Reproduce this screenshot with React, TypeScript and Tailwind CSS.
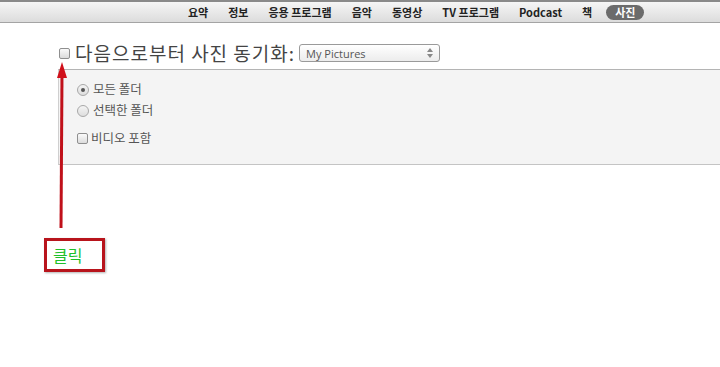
const tabs = ["요약", "정보", "응용 프로그램", "음악", "동영상", "TV 프로그램", "Podcast", "책"];

function Radio({ checked }: { checked?: boolean }) {
	return (
		<span className="flex h-[12px] w-[12px] items-center justify-center rounded-full border border-[#a8a8a8] bg-gradient-to-b from-[#f4f4f4] to-[#dedede]">
			{checked && <span className="h-[4px] w-[4px] rounded-full bg-[#555]" />}
		</span>
	);
}

function Box({ className = "" }: { className?: string }) {
	return (
		<span
			className={`block h-[11px] w-[11px] rounded-[2px] border border-[#8f8f8f] bg-gradient-to-b from-[#fafafa] to-[#dcdcdc] ${className}`}
		/>
	);
}

export default function App() {
	return (
		<div
			className="relative h-[367px] w-[720px] overflow-hidden bg-white"
			style={{ fontFamily: '"Noto Sans CJK KR", "Noto Sans", sans-serif' }}
		>
			<header className="flex h-[23px] items-center border-t-2 border-b border-t-[#8a8a8a] border-b-[#a4a4a4] bg-gradient-to-b from-[#f6f6f6] to-[#dcdcdc] pl-[188px]">
				<nav className="flex items-center gap-[20px] text-[11px] font-bold text-[#222]">
					{tabs.map((t) => (
						<span key={t} className="leading-none">
							{t}
						</span>
					))}
					<span className="-ml-[6px] rounded-full bg-[#6b6b6b] px-[9px] py-[2px] leading-[11px] text-white">사진</span>
				</nav>
			</header>

			<div className="flex items-center pl-[59px] pt-[19px]">
				<Box />
				<span className="ml-[5px] text-[19px] leading-[22px] tracking-[1px] text-[#444]">다음으로부터 사진 동기화:</span>
				<div className="ml-[4px] flex h-[18px] w-[141px] items-center justify-between rounded-[3px] border border-[#9a9a9a] bg-gradient-to-b from-white to-[#ececec] pl-[6px] pr-[6px]">
					<span className="text-[11px] leading-none text-[#555]" style={{ fontFamily: '"Open Sans", sans-serif' }}>
						My Pictures
					</span>
					<svg width="6" height="10" viewBox="0 0 6 10">
						<polygon points="3,0 6,4 0,4" fill="#888" />
						<polygon points="3,10 6,6 0,6" fill="#888" />
					</svg>
				</div>
			</div>

			<section className="mt-[5px] ml-[58px] h-[96px] border-t border-b border-l border-t-[#b4b4b4] border-b-[#c4c4c4] border-l-[#cfcfcf] bg-[#f4f4f4] pl-[18px] pt-[9px] text-[12.5px] text-[#555]">
				<label className="flex h-[21px] items-center gap-[4px]">
					<Radio checked />
					<span>모든 폴더</span>
				</label>
				<label className="flex h-[21px] items-center gap-[4px]">
					<Radio />
					<span>선택한 폴더</span>
				</label>
				<label className="mt-[7px] flex h-[21px] items-center gap-[3px]">
					<Box />
					<span>비디오 포함</span>
				</label>
			</section>

			<svg className="absolute left-[54px] top-[60px]" width="16" height="172" viewBox="0 0 16 172">
				<line x1="8" y1="14" x2="7" y2="168" stroke="#c0101a" strokeWidth="3" />
				<polygon points="8,2 3,18 13,18" fill="#d0101a" />
			</svg>

			<div className="absolute left-[44px] top-[238px] flex h-[34px] w-[61px] items-center border-[3px] border-[#b8141c] bg-white pl-[6px] shadow-[1px_1px_2px_rgba(0,0,0,0.3)]">
				<span className="text-[16px] leading-none text-[#1fbf2a]">클릭</span>
			</div>
		</div>
	);
}
